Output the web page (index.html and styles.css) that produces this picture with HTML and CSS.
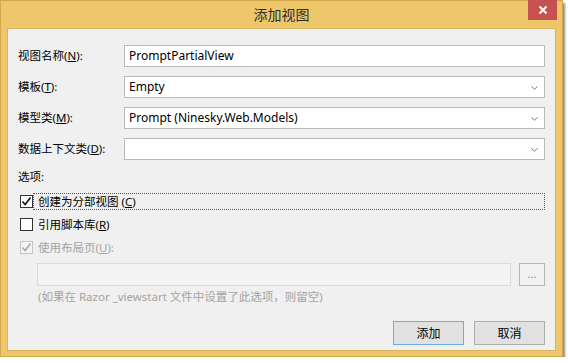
FILE: index.html
```html
<!DOCTYPE html>
<html lang="zh-CN">
<head>
  <meta charset="UTF-8">
  <meta name="viewport" content="width=device-width, initial-scale=1.0">
  <title>添加视图</title>
  <link rel="stylesheet" href="styles.css">
</head>
<body>
  <div class="window">
    <div class="titlebar">
      <span class="title">添加视图</span>
      <div class="close">
        <svg width="10" height="10" viewBox="0 0 10 10">
          <path d="M1.5 1.5 L8.5 8.5 M8.5 1.5 L1.5 8.5" stroke="#fff" stroke-width="2"/>
        </svg>
      </div>
    </div>
    <div class="content">
      <!-- 字段 -->
      <div class="fields">
        <label>视图名称(<u>N</u>):</label>
        <div class="box">PromptPartialView</div>
        <label>模板(<u>T</u>):</label>
        <div class="box combo">Empty
          <svg class="arrow" width="7" height="4" viewBox="0 0 7 4"><path d="M0.5 0.5 L3.5 3.2 L6.5 0.5" fill="none" stroke="#777" stroke-width="1"/></svg>
        </div>
        <label>模型类(<u>M</u>):</label>
        <div class="box combo">Prompt (Ninesky.Web.Models)
          <svg class="arrow" width="7" height="4" viewBox="0 0 7 4"><path d="M0.5 0.5 L3.5 3.2 L6.5 0.5" fill="none" stroke="#777" stroke-width="1"/></svg>
        </div>
        <label>数据上下文类(<u>D</u>):</label>
        <div class="box combo">
          <svg class="arrow" width="7" height="4" viewBox="0 0 7 4"><path d="M0.5 0.5 L3.5 3.2 L6.5 0.5" fill="none" stroke="#777" stroke-width="1"/></svg>
        </div>
      </div>

      <div class="section">选项:</div>

      <div class="check-row">
        <span class="check checked">
          <svg width="11" height="11" viewBox="0 0 11 11"><path d="M1.5 5.5 L4.2 8.5 L9.5 1.5" fill="none" stroke="#111" stroke-width="1.6"/></svg>
        </span>
        <span class="check-label focus">创建为分部视图 (<u>C</u>)</span>
      </div>
      <div class="check-row">
        <span class="check"></span>
        <span class="check-label">引用脚本库(<u>R</u>)</span>
      </div>
      <div class="check-row disabled">
        <span class="check checked">
          <svg width="11" height="11" viewBox="0 0 11 11"><path d="M1.5 5.5 L4.2 8.5 L9.5 1.5" fill="none" stroke="#a8a8a8" stroke-width="1.6"/></svg>
        </span>
        <span class="check-label">使用布局页(<u>U</u>):</span>
      </div>

      <div class="layout-row">
        <div class="box off"></div>
        <div class="browse">...</div>
      </div>
      <div class="hint">(如果在 Razor _viewstart 文件中设置了此选项，则留空)</div>

      <div class="actions">
        <button class="primary">添加</button>
        <button>取消</button>
      </div>
    </div>
  </div>
</body>
</html>
```

FILE: styles.css
```css
body {
  margin: 0;
  background-color: #fff;
  font-family: "Noto Sans", "Noto Sans CJK SC", sans-serif;
  font-size: 11.5px;
  color: #000;
}

.window {
  width: 561px;
  height: 355px;
  background-color: #efc76b;
  border: 1px solid #d3a84c;
  box-shadow: 2px 3px 2px rgba(0, 0, 0, 0.45);
  display: flex;
  flex-direction: column;
}

.titlebar {
  position: relative;
  height: 27px;
  display: flex;
  justify-content: center;
  align-items: center;
}
.title {
  font-size: 14px;
  color: #2d2d2d;
  margin-top: -1px;
}
.close {
  position: absolute;
  top: -1px;
  right: 5px;
  width: 29px;
  height: 20px;
  background-color: #c75050;
  display: flex;
  justify-content: center;
  align-items: center;
}

.content {
  margin: 0 6px 5px 6px;
  flex: 1;
  background-color: #f0f0f0;
  border: 1px solid #d9b35e;
  padding: 16px 10px 0 10px;
}

.fields {
  display: grid;
  grid-template-columns: 106px 1fr;
  grid-auto-rows: 22px;
  row-gap: 9px;
  align-items: center;
}
.fields label {
  line-height: 16px;
}

.box {
  position: relative;
  height: 22px;
  box-sizing: border-box;
  border: 1px solid #b9b9b9;
  background-color: #fff;
  padding: 0 4px;
  font-size: 12px;
  line-height: 19px;
  white-space: nowrap;
}
.combo .arrow {
  position: absolute;
  right: 6px;
  top: 9px;
}

.section {
  margin-top: 9px;
  line-height: 16px;
}

.check-row {
  display: flex;
  align-items: center;
  height: 17px;
  margin-top: 6px;
}
.section + .check-row {
  margin-top: 8px;
}
.check {
  width: 11px;
  height: 11px;
  margin-left: 2px;
  border: 1px solid #333;
  background-color: #fff;
  display: flex;
  align-items: center;
  justify-content: center;
}
.check-label {
  flex: 1;
  height: 17px;
  box-sizing: border-box;
  border: 1px dotted transparent;
  padding-left: 4px;
  line-height: 15px;
}
.check-label.focus {
  border-color: #555;
}
.disabled {
  color: #a3a3a3;
}
.disabled .check {
  border-color: #c4c4c4;
  background-color: #f4f4f4;
}

.layout-row {
  display: flex;
  gap: 8px;
  margin-top: 7px;
  padding-left: 19px;
}
.box.off {
  width: 474px;
  height: 23px;
  background-color: #f4f4f4;
  border-color: #dadada;
}
.browse {
  width: 26px;
  height: 23px;
  box-sizing: border-box;
  border: 1px solid #b5b5b5;
  background-color: #f2f2f2;
  color: #8c8c9c;
  text-align: center;
  line-height: 19px;
  font-size: 11px;
}

.hint {
  margin-top: 4px;
  padding-left: 20px;
  line-height: 14px;
  color: #a3a3a3;
}

.actions {
  display: flex;
  justify-content: flex-end;
  gap: 10px;
  margin-top: 17px;
}
button {
  width: 71px;
  height: 24px;
  font-family: "Noto Sans", "Noto Sans CJK SC", sans-serif;
  font-size: 12px;
  color: #000;
  background-color: #e1e1e1;
  border: 1px solid #adadad;
  padding: 0;
}
button.primary {
  border-color: #6faae6;
}
```
